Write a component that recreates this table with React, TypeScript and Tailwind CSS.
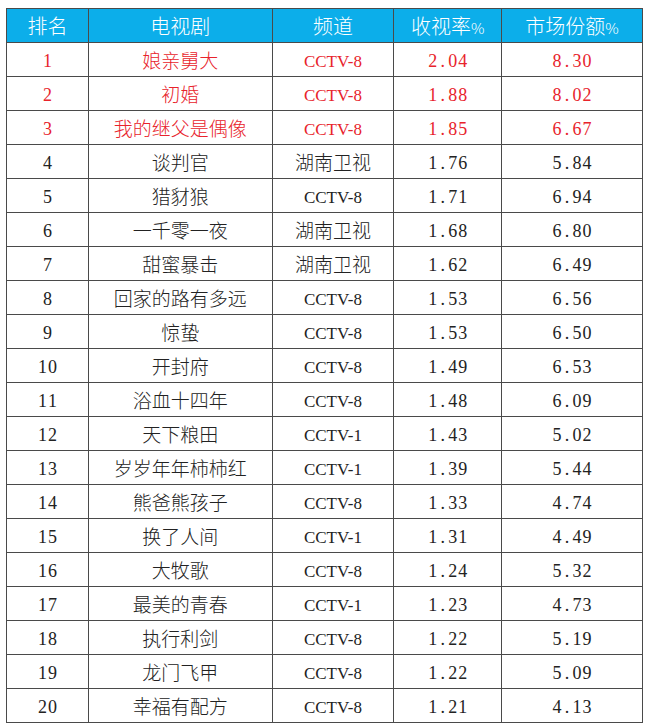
import React from "react";

type Row = { rank: number; title: string; channel: string; rating: string; share: string };

const rows: Row[] = [
    { rank: 1, title: "娘亲舅大", channel: "CCTV-8", rating: "2.04", share: "8.30" },
    { rank: 2, title: "初婚", channel: "CCTV-8", rating: "1.88", share: "8.02" },
    { rank: 3, title: "我的继父是偶像", channel: "CCTV-8", rating: "1.85", share: "6.67" },
    { rank: 4, title: "谈判官", channel: "湖南卫视", rating: "1.76", share: "5.84" },
    { rank: 5, title: "猎豺狼", channel: "CCTV-8", rating: "1.71", share: "6.94" },
    { rank: 6, title: "一千零一夜", channel: "湖南卫视", rating: "1.68", share: "6.80" },
    { rank: 7, title: "甜蜜暴击", channel: "湖南卫视", rating: "1.62", share: "6.49" },
    { rank: 8, title: "回家的路有多远", channel: "CCTV-8", rating: "1.53", share: "6.56" },
    { rank: 9, title: "惊蛰", channel: "CCTV-8", rating: "1.53", share: "6.50" },
    { rank: 10, title: "开封府", channel: "CCTV-8", rating: "1.49", share: "6.53" },
    { rank: 11, title: "浴血十四年", channel: "CCTV-8", rating: "1.48", share: "6.09" },
    { rank: 12, title: "天下粮田", channel: "CCTV-1", rating: "1.43", share: "5.02" },
    { rank: 13, title: "岁岁年年柿柿红", channel: "CCTV-1", rating: "1.39", share: "5.44" },
    { rank: 14, title: "熊爸熊孩子", channel: "CCTV-8", rating: "1.33", share: "4.74" },
    { rank: 15, title: "换了人间", channel: "CCTV-1", rating: "1.31", share: "4.49" },
    { rank: 16, title: "大牧歌", channel: "CCTV-8", rating: "1.24", share: "5.32" },
    { rank: 17, title: "最美的青春", channel: "CCTV-1", rating: "1.23", share: "4.73" },
    { rank: 18, title: "执行利剑", channel: "CCTV-8", rating: "1.22", share: "5.19" },
    { rank: 19, title: "龙门飞甲", channel: "CCTV-8", rating: "1.22", share: "5.09" },
    { rank: 20, title: "幸福有配方", channel: "CCTV-8", rating: "1.21", share: "4.13" },
];

// numbers set in fixed 10px cells, like the half-width song font in the source
function Digits({ text }: { text: string }) {
    return (
        <span className="inline-flex font-['Liberation_Serif',serif] text-[18px] font-normal">
            {text.split("").map((ch, i) => (
                <span key={i} className="inline-block w-[10px] text-center">
                    {ch}
                </span>
            ))}
        </span>
    );
}

function Cell({ text }: { text: string }) {
    if (/^[0-9.]+$/.test(text)) return <Digits text={text} />;
    if (/^[A-Za-z0-9\-]+$/.test(text))
        return <span className="font-['Liberation_Serif',serif] text-[17px] font-normal">{text}</span>;
    return <span>{text}</span>;
}

const td = "border border-[#4a4a4a] h-[34px] p-0 text-center align-middle";

export default function App() {
    return (
        <div className="min-h-screen bg-white pt-[8px] pl-[6px]">
            <table className="w-[637px] border-collapse font-['Noto_Sans_CJK_SC',sans-serif] text-[19px] font-light leading-none">
                <colgroup>
                    <col className="w-[82px]" />
                    <col className="w-[184px]" />
                    <col className="w-[122px]" />
                    <col className="w-[108px]" />
                    <col className="w-[141px]" />
                </colgroup>
                <thead>
                    <tr className="bg-[#0caeea] text-white text-[20px]">
                        <th className={`${td} font-light`}>排名</th>
                        <th className={`${td} font-light`}>电视剧</th>
                        <th className={`${td} font-light`}>频道</th>
                        <th className={`${td} font-light`}>
                            收视率<span className="text-[15px]">%</span>
                        </th>
                        <th className={`${td} font-light`}>
                            市场份额<span className="text-[15px]">%</span>
                        </th>
                    </tr>
                </thead>
                <tbody>
                    {rows.map((r) => (
                        <tr key={r.rank} className={r.rank <= 3 ? "text-[#e8232b]" : "text-[#222222]"}>
                            <td className={td}>
                                <Cell text={String(r.rank)} />
                            </td>
                            <td className={td}>
                                <Cell text={r.title} />
                            </td>
                            <td className={td}>
                                <Cell text={r.channel} />
                            </td>
                            <td className={td}>
                                <Cell text={r.rating} />
                            </td>
                            <td className={td}>
                                <Cell text={r.share} />
                            </td>
                        </tr>
                    ))}
                </tbody>
            </table>
        </div>
    );
}
